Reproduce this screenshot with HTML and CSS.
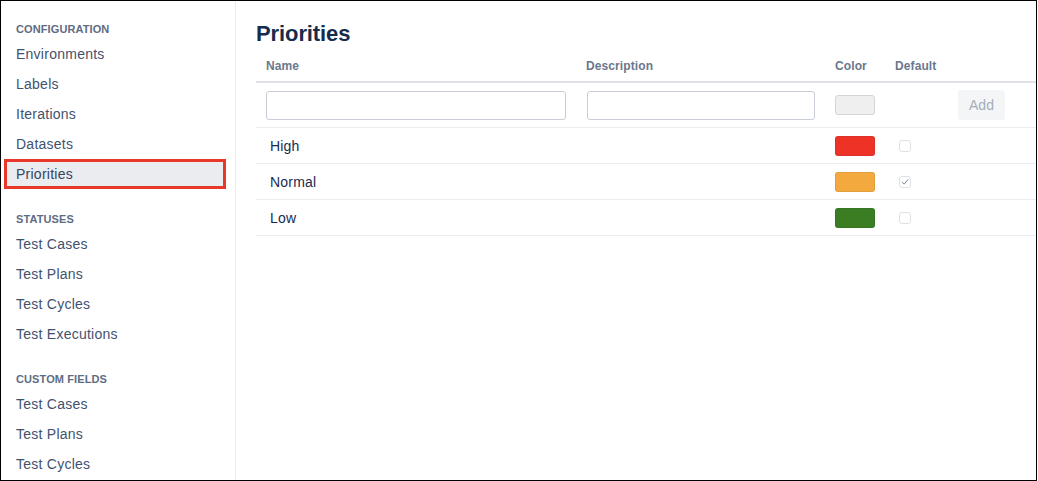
FILE: index.html
```html
<!DOCTYPE html>
<html>
<head>
<meta charset="utf-8">
<link rel="stylesheet" href="styles.css">
</head>
<body>
<div class="frame">
  <aside class="sidebar">
    <div class="group">
      <div class="group-title">Configuration</div>
      <div class="nav-item">Environments</div>
      <div class="nav-item">Labels</div>
      <div class="nav-item">Iterations</div>
      <div class="nav-item">Datasets</div>
      <div class="nav-item selected">Priorities</div>
    </div>
    <div class="group">
      <div class="group-title">Statuses</div>
      <div class="nav-item">Test Cases</div>
      <div class="nav-item">Test Plans</div>
      <div class="nav-item">Test Cycles</div>
      <div class="nav-item">Test Executions</div>
    </div>
    <div class="group">
      <div class="group-title">Custom Fields</div>
      <div class="nav-item">Test Cases</div>
      <div class="nav-item">Test Plans</div>
      <div class="nav-item">Test Cycles</div>
    </div>
  </aside>
  <main class="main">
    <h1 class="title">Priorities</h1>
    <table class="table">
      <colgroup>
        <col class="c-name"><col class="c-desc"><col class="c-color"><col class="c-default"><col class="c-act">
      </colgroup>
      <thead>
        <tr><th>Name</th><th>Description</th><th>Color</th><th>Default</th><th></th></tr>
      </thead>
      <tbody>
        <tr class="input-row">
          <td><div class="text-input name-input"></div></td>
          <td><div class="text-input desc-input"></div></td>
          <td><div class="swatch empty"></div></td>
          <td></td>
          <td><button class="add-btn">Add</button></td>
        </tr>
        <tr class="data-row">
          <td class="name-cell">High</td><td></td>
          <td><div class="swatch red"></div></td>
          <td><span class="check"></span></td><td></td>
        </tr>
        <tr class="data-row">
          <td class="name-cell">Normal</td><td></td>
          <td><div class="swatch orange"></div></td>
          <td><span class="check checked"><svg viewBox="0 0 12 12" width="12" height="12"><path d="M3.4 6.3 L5.2 8.1 L8.7 3.8" fill="none" stroke="#7a869a" stroke-width="1" stroke-linecap="round" stroke-linejoin="round"/></svg></span></td><td></td>
        </tr>
        <tr class="data-row">
          <td class="name-cell">Low</td><td></td>
          <td><div class="swatch green"></div></td>
          <td><span class="check"></span></td><td></td>
        </tr>
      </tbody>
    </table>
  </main>
</div>
</body>
</html>
```
FILE: styles.css
```css
html, body {
  margin: 0;
  padding: 0;
  background: #ffffff;
}
body {
  font-family: "Liberation Sans", Arial, sans-serif;
  color: #172b4d;
}
.frame {
  box-sizing: border-box;
  width: 1037px;
  height: 481px;
  border: 1px solid #000000;
  display: flex;
  overflow: hidden;
  background: #ffffff;
}
.sidebar {
  width: 234px;
  flex: none;
  border-right: 1px solid #ebecf0;
  padding-top: 20px;
}
.group + .group {
  margin-top: 22px;
}
.group-title {
  font-size: 11px;
  font-weight: bold;
  text-transform: uppercase;
  color: #5e6c84;
  line-height: 16px;
  height: 16px;
  margin-bottom: 2px;
  padding-left: 15px;
  letter-spacing: 0.1px;
}
.nav-item {
  height: 30px;
  line-height: 30px;
  font-size: 14px;
  color: #42526e;
  padding-left: 15px;
  letter-spacing: 0.25px;
}
.nav-item.selected {
  box-sizing: border-box;
  margin: 0 9px 0 3px;
  padding-left: 9px;
  border: 3px solid #e8382c;
  background: #ebecf0;
  line-height: 24px;
  color: #344563;
}
.main {
  flex: 1;
  padding-left: 20px;
  padding-top: 19px;
  min-width: 0;
}
.title {
  margin: 0 0 2px 0;
  font-size: 22px;
  line-height: 28px;
  font-weight: bold;
  color: #172b4d;
  letter-spacing: -0.1px;
}
.table {
  border-collapse: collapse;
  table-layout: fixed;
  width: 780px;
}
.c-name { width: 320px; }
.c-desc { width: 249px; }
.c-color { width: 60px; }
.c-default { width: 63px; }
.c-act { width: 88px; }
th {
  text-align: left;
  font-size: 12px;
  font-weight: bold;
  color: #6b778c;
  padding: 0 10px;
  height: 31px;
  border-bottom: 2px solid #dfe1e6;
  letter-spacing: 0.1px;
}
td {
  padding: 0 10px;
  border-bottom: 1px solid #ebecf0;
  vertical-align: middle;
}
.input-row td {
  height: 44px;
}
.data-row td {
  height: 35px;
  font-size: 14px;
  color: #172b4d;
}
.data-row td.name-cell {
  padding-left: 14px;
  letter-spacing: 0.2px;
}
.text-input {
  box-sizing: border-box;
  height: 29px;
  border: 1px solid #c9ced6;
  border-radius: 3px;
  background: #ffffff;
}
.name-input { width: 300px; }
.desc-input { width: 228px; margin-left: 1px; }
.swatch {
  width: 40px;
  height: 20px;
  border-radius: 3px;
  box-sizing: border-box;
  border: 1px solid rgba(9, 30, 66, 0.08);
}
.swatch.empty {
  background: #efefef;
  border: 1px solid #d4d4d4;
}
.swatch.red { background: #ee3326; }
.swatch.orange { background: #f4a93e; }
.swatch.green { background: #3a7d22; }
.check {
  display: block;
  box-sizing: border-box;
  width: 12px;
  height: 12px;
  margin-left: 4px;
  border: 1px solid #dfe1e6;
  border-radius: 3px;
  background: #ffffff;
  position: relative;
}
.check svg {
  position: absolute;
  left: -1px;
  top: -1px;
}
.add-btn {
  width: 47px;
  height: 30px;
  border: none;
  border-radius: 3px;
  background: #f4f5f7;
  color: #a5adba;
  font-family: "Liberation Sans", Arial, sans-serif;
  font-size: 14px;
  padding: 0;
}
```
